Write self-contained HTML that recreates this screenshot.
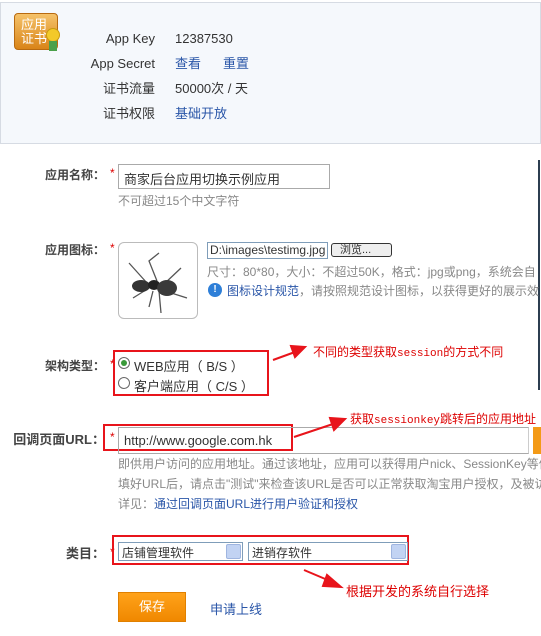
<!DOCTYPE html>
<html><head><meta charset="utf-8"><style>
*{margin:0;padding:0;box-sizing:border-box}
body{width:541px;height:636px;background:#fff;font-family:"Liberation Sans","Noto Sans CJK SC",sans-serif;font-size:12px;color:#333;position:relative;overflow:hidden}
.a{position:absolute;white-space:nowrap}
.lbl{font-weight:bold;color:#444;text-align:right}
.blue{color:#2a56a8}
.grey{color:#888}
.red{color:#d00}
.star{color:#d00}
.rb{position:absolute;border:2px solid #e8141b}
.sel{position:absolute;border:1px solid #7f9db9;background:#fff;height:19px;font-size:12px;padding:1px 3px}
.sel i{position:absolute;right:1px;top:1px;width:15px;height:15px;background:#c2d3f3;border:1px solid #9fb5e0;border-radius:2px}
.mono{font-family:"Liberation Mono","Noto Sans CJK SC",monospace;font-size:11px}
</style></head><body>
<div class="a" style="left:0;top:2px;width:541px;height:142px;background:#f5f8fc;border:1px solid #d6dbe3"></div>
<div class="a" style="left:14px;top:13px;width:44px;height:37px;background:linear-gradient(#f5c26a,#d98418);border:1px solid #b86a10;border-radius:4px;color:#fff;font-size:13px;line-height:14px;padding:4px 0 0 6px;white-space:normal">应用<br>证书</div>
<div class="a" style="left:46px;top:28px;width:14px;height:14px;border-radius:50%;background:#f3c929;border:1px solid #c89a10"></div>
<div class="a" style="left:49px;top:41px;width:8px;height:10px;background:#4aa04a"></div>
<div class="a" style="right:386px;top:31px;text-align:right;font-size:13px;line-height:16px">App Key</div>
<div class="a" style="right:386px;top:56px;font-size:13px;line-height:16px">App Secret</div>
<div class="a" style="right:386px;top:81px;font-size:13px;line-height:16px">证书流量</div>
<div class="a" style="right:386px;top:106px;font-size:13px;line-height:16px">证书权限</div>
<div class="a" style="left:175px;top:31px;font-size:13px;line-height:16px">12387530</div>
<div class="a blue" style="left:175px;top:56px;font-size:13px;line-height:16px">查看</div>
<div class="a blue" style="left:223px;top:56px;font-size:13px;line-height:16px">重置</div>
<div class="a" style="left:175px;top:81px;font-size:13px;line-height:16px">50000次 / 天</div>
<div class="a blue" style="left:175px;top:106px;font-size:13px;line-height:16px">基础开放</div>

<div class="a" style="left:538px;top:160px;width:2px;height:230px;background:#2c3e50"></div>

<div class="a lbl" style="right:436px;top:166px">应用名称：</div><div class="a star" style="left:110px;top:166px">*</div>
<div class="a" style="left:118px;top:164px;width:212px;height:25px;border:1px solid #aaa;padding:4px 5px;font-size:13px">商家后台应用切换示例应用</div>
<div class="a grey" style="left:118px;top:192px">不可超过15个中文字符</div>

<div class="a lbl" style="right:436px;top:241px">应用图标：</div><div class="a star" style="left:110px;top:241px">*</div>
<div class="a" style="left:118px;top:242px;width:80px;height:77px;border:1px solid #bbb;border-radius:6px;background:#fff">
<svg width="78" height="75" viewBox="0 0 78 75"><g stroke="#555" stroke-width="1.3" fill="none"><path d="M10 20L28 40M14 55L30 45M38 38L30 18L40 10M44 42L62 25M46 48L68 55M40 48L42 70M34 48L30 64"/></g><ellipse cx="22" cy="43" rx="9" ry="6" fill="#333"/><ellipse cx="35" cy="42" rx="6" ry="5" fill="#222"/><ellipse cx="48" cy="45" rx="10" ry="8" fill="#3a3a3a"/></svg></div>
<div class="a" style="left:207px;top:242px;width:121px;height:17px;border:1px solid #7f9db9;font-size:12px;padding:0 2px;line-height:15px;overflow:hidden">D:\images\testimg.jpg</div>
<div class="a" style="left:331px;top:243px;width:61px;height:14px;border:1px solid #333;border-radius:3px;background:#eee;font-size:11px;line-height:12px;padding-left:8px">浏览...</div>
<div class="a grey" style="left:207px;top:263px">尺寸：80*80，大小：不超过50K，格式：jpg或png，系统会自</div>
<div class="a" style="left:208px;top:283px;width:14px;height:14px;border-radius:50%;background:#2e7fd8;color:#fff;font-size:10px;text-align:center;line-height:14px;font-weight:bold">!</div>
<div class="a grey" style="left:227px;top:282px"><span class="blue">图标设计规范</span>，请按照规范设计图标，以获得更好的展示效</div>

<div class="a lbl" style="right:436px;top:357px">架构类型：</div><div class="a star" style="left:110px;top:357px">*</div>
<div class="rb" style="left:113px;top:350px;width:156px;height:46px"></div>
<div class="a" style="left:118px;top:357px;width:12px;height:12px;border:1px solid #666;border-radius:50%;background:#fff"><div style="margin:2px;width:6px;height:6px;border-radius:50%;background:#3a9a3a"></div></div>
<div class="a" style="left:134px;top:356px;font-size:13px">WEB应用（ B/S ）</div>
<div class="a" style="left:118px;top:377px;width:12px;height:12px;border:1px solid #666;border-radius:50%;background:#fff"></div>
<div class="a" style="left:134px;top:376px;font-size:13px">客户端应用（ C/S ）</div>
<div class="a red" style="left:313px;top:343px">不同的类型获取<span class="mono">session</span>的方式不同</div>

<div class="a lbl" style="right:436px;top:429px;font-size:13px">回调页面URL：</div>
<div class="rb" style="left:103px;top:424px;width:190px;height:27px"></div>
<div class="a star" style="left:110px;top:430px">*</div>
<div class="a" style="left:118px;top:427px;width:411px;height:27px;border:1px solid #aaa;border-right-color:#ccc;padding:5px 5px;font-size:13px">http://www.google.com.hk</div>
<div class="a" style="left:533px;top:427px;width:10px;height:27px;background:#f39a16"></div>
<div class="a red" style="left:350px;top:410px">获取<span class="mono">sessionkey</span>跳转后的应用地址</div>
<div class="a grey" style="left:118px;top:455px">即供用户访问的应用地址。通过该地址，应用可以获得用户nick、SessionKey等信</div>
<div class="a grey" style="left:118px;top:475px">填好URL后，请点击"测试"来检查该URL是否可以正常获取淘宝用户授权，及被访</div>
<div class="a grey" style="left:118px;top:495px">详见：<span class="blue">通过回调页面URL进行用户验证和授权</span></div>

<div class="a lbl" style="right:436px;top:543px;font-size:13px">类目：</div><div class="a star" style="left:110px;top:545px">*</div>
<div class="rb" style="left:112px;top:535px;width:297px;height:30px"></div>
<div class="sel" style="left:118px;top:542px;width:125px">店铺管理软件<i></i></div>
<div class="sel" style="left:248px;top:542px;width:160px">进销存软件<i></i></div>
<div class="a red" style="left:346px;top:581px;font-size:13px">根据开发的系统自行选择</div>
<div class="a" style="left:118px;top:592px;width:68px;height:30px;background:linear-gradient(#ffa21a,#f08800);border:1px solid #e08000;color:#fff;font-size:13px;text-align:center;line-height:28px">保存</div>
<div class="a blue" style="left:210px;top:599px;font-size:13px">申请上线</div>

<svg class="a" style="left:0;top:0" width="541" height="636"><g stroke="#e8141b" stroke-width="2" fill="#e8141b">
<line x1="273" y1="360" x2="295" y2="352"/><polygon points="305,347 291,346 295,357"/>
<line x1="294" y1="437" x2="333" y2="424"/><polygon points="345,419 330,418 334,430"/>
<line x1="304" y1="570" x2="330" y2="581"/><polygon points="341,587 327,575 323,586"/>
</g></svg>
</body></html>
